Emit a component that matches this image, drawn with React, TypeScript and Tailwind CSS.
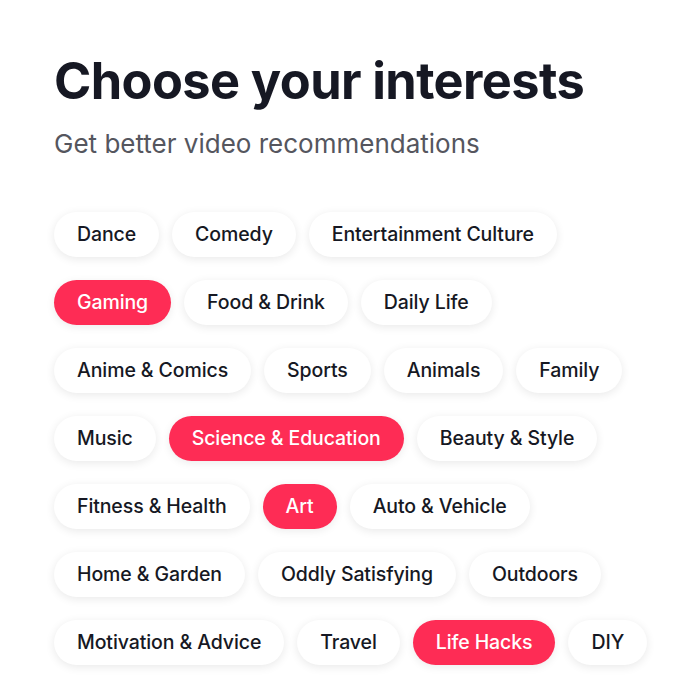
import React, { useState } from "react";

const ROWS: string[][] = [
  ["Dance", "Comedy", "Entertainment Culture"],
  ["Gaming", "Food & Drink", "Daily Life"],
  ["Anime & Comics", "Sports", "Animals", "Family"],
  ["Music", "Science & Education", "Beauty & Style"],
  ["Fitness & Health", "Art", "Auto & Vehicle"],
  ["Home & Garden", "Oddly Satisfying", "Outdoors"],
  ["Motivation & Advice", "Travel", "Life Hacks", "DIY"],
];

const INITIAL = ["Gaming", "Science & Education", "Art", "Life Hacks"];

function Pill({ label, active, onClick }: { label: string; active: boolean; onClick: () => void }) {
  return (
    <button
      type="button"
      onClick={onClick}
      className={
        active
          ? "shrink-0 whitespace-nowrap h-[45px] px-[23px] rounded-full bg-[#fe2c55] text-white text-[19.5px] tracking-[-0.1px] font-medium shadow-[0_2px_8px_rgba(0,0,0,0.08)]"
          : "shrink-0 whitespace-nowrap h-[45px] px-[23px] rounded-full bg-white text-[#161823] text-[19.5px] tracking-[-0.1px] font-medium shadow-[0_2px_10px_rgba(0,0,0,0.09)]"
      }
    >
      {label}
    </button>
  );
}

export default function App() {
  const [selected, setSelected] = useState<string[]>(INITIAL);

  const toggle = (label: string) =>
    setSelected((prev) => (prev.includes(label) ? prev.filter((l) => l !== label) : [...prev, label]));

  return (
    <div className="w-[700px] h-[700px] bg-white overflow-hidden font-['Inter',sans-serif] px-[54px] pt-[51px]">
      <h1 className="text-[50.5px] leading-[60px] font-bold text-[#161823] tracking-[-0.6px]">Choose your interests</h1>
      <p className="mt-[18px] text-[26px] leading-[30px] text-[#55565e]">Get better video recommendations</p>

      <div className="mt-[53px] flex flex-col gap-[23px]">
        {ROWS.map((row, i) => (
          <div key={i} className="flex gap-[13px]">
            {row.map((label) => (
              <Pill key={label} label={label} active={selected.includes(label)} onClick={() => toggle(label)} />
            ))}
          </div>
        ))}
      </div>
    </div>
  );
}
